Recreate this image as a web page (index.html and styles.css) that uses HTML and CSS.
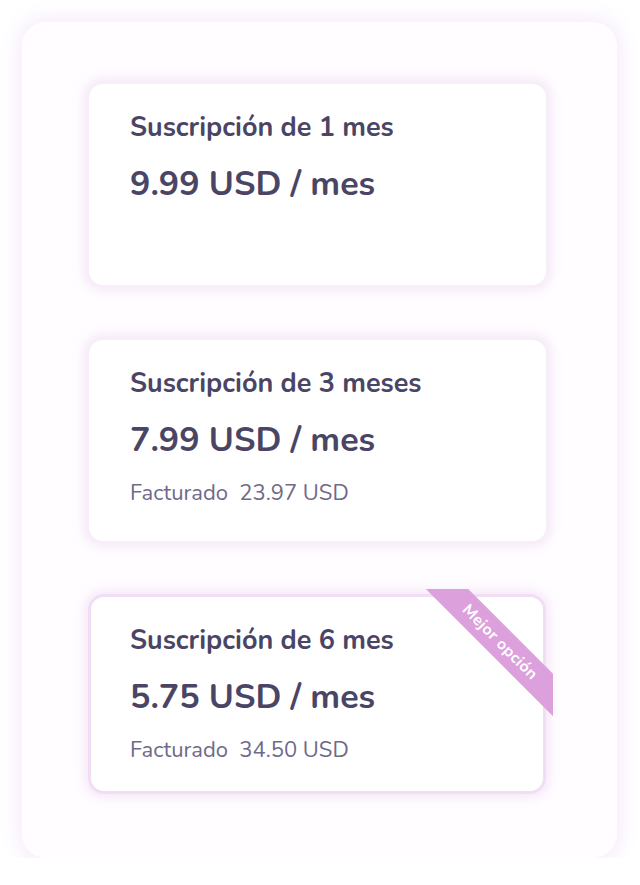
FILE: index.html
```html
<!DOCTYPE html>
<html>
<head>
    <title>Suscripciones</title>
    <meta http-equiv="Content-Type" content="text/html; charset=utf-8"/>
    <link rel="stylesheet" href="styles.css">
</head>
<body>
<div id="plans">
    <div class="plan">
        <div class="planTitle">Suscripción de 1 mes</div>
        <div class="planPrice">9.99 USD / mes</div>
    </div>
    <div class="plan">
        <div class="planTitle">Suscripción de 3 meses</div>
        <div class="planPrice">7.99 USD / mes</div>
        <div class="planBilled">Facturado&nbsp; 23.97 USD</div>
    </div>
    <div class="plan selected">
        <div class="ribbonClip">
            <div class="ribbon">Mejor opción</div>
        </div>
        <div class="planTitle">Suscripción de 6 mes</div>
        <div class="planPrice">5.75 USD / mes</div>
        <div class="planBilled">Facturado&nbsp; 34.50 USD</div>
    </div>
</div>
</body>
</html>
```

FILE: styles.css
```css
body {
    margin: 0;
    background-color: #ffffff;
    font-family: "Nunito", Lato, "Noto Sans", sans-serif;
    color: #4a4565;
}

#plans {
    margin: 22px 0 0 22px;
    width: 595px;
    height: 836px;
    box-sizing: border-box;
    padding: 60px 0 0 65px;
    border-radius: 24px;
    background-color: #fffdff;
    box-shadow: 0 0 16px 6px rgba(240, 218, 246, 0.45);
    display: flex;
    flex-direction: column;
    align-items: flex-start;
    gap: 51px;
}

.plan {
    position: relative;
    width: 461px;
    height: 205px;
    box-sizing: border-box;
    padding: 26px 0 0 41px;
    background-color: #ffffff;
    border-radius: 16px;
    border: 2px solid #f7eef9;
    box-shadow: 0 0 10px 4px rgba(238, 216, 244, 0.55);
}

.plan.selected {
    margin-left: 1px;
    width: 458px;
    height: 200px;
    padding-left: 39px;
    border: 3px solid #f1def5;
}

.planTitle {
    font-size: 27px;
    font-weight: bold;
    line-height: 36px;
}

.planPrice {
    margin-top: 16px;
    font-size: 34px;
    font-weight: bold;
    line-height: 44px;
}

.planBilled {
    margin-top: 17px;
    font-size: 22px;
    color: #6f6a89;
    line-height: 28px;
}

.ribbonClip {
    position: absolute;
    top: -8px;
    right: -10px;
    width: 128px;
    height: 127px;
    overflow: hidden;
}

.ribbon {
    position: absolute;
    left: -25px;
    top: 38px;
    width: 200px;
    height: 30px;
    line-height: 30px;
    text-align: center;
    background-color: #dca0dc;
    color: #ffffff;
    font-size: 16px;
    font-weight: bold;
    letter-spacing: 0.3px;
    transform: rotate(45deg);
}
```
